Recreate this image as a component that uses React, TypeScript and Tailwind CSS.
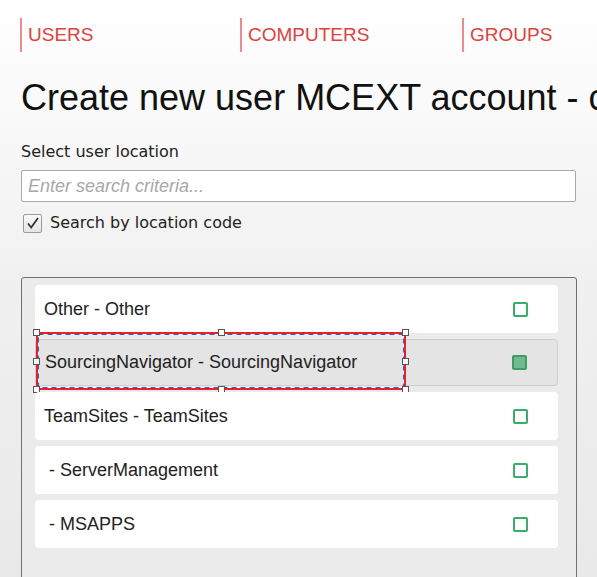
import React from "react";

const locations = [
  { label: "Other - Other", selected: false },
  { label: "SourcingNavigator - SourcingNavigator", selected: true },
  { label: "TeamSites - TeamSites", selected: false },
  { label: " - ServerManagement", selected: false },
  { label: " - MSAPPS", selected: false },
];

function Handle() {
  return <div className="w-[7px] h-[7px] bg-white border border-[#555]" />;
}

// inspector-style highlight drawn over the selected row
function SelectionOverlay() {
  return (
    <div className="absolute left-0 top-[-8px] w-[370px] h-[58px] border-2 border-[#e8202a] pointer-events-none">
      <svg className="absolute inset-0 w-full h-full">
        <rect x="0.5" y="0.5" width="365" height="53" fill="none" stroke="#ffffff" strokeWidth="1" />
        <rect x="0.5" y="0.5" width="365" height="53" fill="none" stroke="#2d5fd3" strokeWidth="1" strokeDasharray="5 4" />
      </svg>
      <div className="absolute inset-[-5px] flex flex-col justify-between">
        <div className="flex justify-between">
          <Handle />
          <Handle />
          <Handle />
        </div>
        <div className="flex justify-between">
          <Handle />
          <Handle />
        </div>
        <div className="flex justify-between">
          <Handle />
          <Handle />
          <Handle />
        </div>
      </div>
    </div>
  );
}

export default function App() {
  return (
    <div className="h-[577px] w-full overflow-hidden bg-gradient-to-b from-[#ffffff] via-[#f0f0f0] to-[#e9e9e9] font-['Liberation_Sans',Arial,sans-serif]">
      {/* Top nav */}
      <nav className="flex pt-[18px] pl-5">
        <div className="w-[220px] shrink-0 h-[34px] flex items-center border-l-2 border-[#ee8c8c] pl-[6px] text-[19px] text-[#e1403d]">
          USERS
        </div>
        <div className="w-[222px] shrink-0 h-[34px] flex items-center border-l-2 border-[#ee8c8c] pl-[6px] text-[19px] text-[#e1403d]">
          COMPUTERS
        </div>
        <div className="w-[222px] shrink-0 h-[34px] flex items-center border-l-2 border-[#ee8c8c] pl-[6px] text-[19px] text-[#e1403d]">
          GROUPS
        </div>
      </nav>

      <div className="px-[21px]">
        {/* Heading */}
        <h1 className="mt-[25px] text-[36px] leading-[41px] text-[#111] whitespace-nowrap">
          Create new user MCEXT account - cloud only
        </h1>

        <div className="mt-[24px] text-[16px] leading-[19px] text-[#222] font-['DejaVu_Sans',Verdana,sans-serif]">
          Select user location
        </div>

        <input
          type="text"
          placeholder="Enter search criteria..."
          className="mt-[9px] w-[555px] h-[32px] bg-white border border-[#a9a9ad] rounded-[2px] px-[6px] text-[18px] italic placeholder:text-[#a8a8a8] outline-none"
        />

        <label className="mt-[9px] h-[24px] flex items-center gap-[8px] text-[16px] text-[#222] font-['DejaVu_Sans',Verdana,sans-serif]">
          <span className="ml-[2px] w-[19px] h-[19px] rounded-[2px] border border-[#9a9a9a] bg-gradient-to-b from-[#fafafa] to-[#e4e4e4] flex items-center justify-center">
            <svg width="14" height="14" viewBox="0 0 14 14">
              <path d="M2 7.5 L5.2 11.5 L12 2" fill="none" stroke="#333" strokeWidth="1.8" />
            </svg>
          </span>
          Search by location code
        </label>

        {/* Locations panel */}
        <div className="mt-[42px] w-[556px] h-[320px] border border-[#707070] rounded-t-[3px] bg-[#ebebeb] pt-[7px] pl-[13px] pr-[18px] flex flex-col gap-[6px]">
          {locations.map((loc) => (
            <div
              key={loc.label}
              className={`relative shrink-0 rounded-[4px] flex items-center justify-between pl-[9px] pr-[30px] text-[18px] text-[#222] whitespace-pre ${
                loc.selected
                  ? "h-[47px] bg-[#e4e4e4] border border-[#cdcdcd]"
                  : "h-[48px] bg-white"
              }`}
            >
              <span>{loc.label}</span>
              <span
                className={`w-[15px] h-[15px] rounded-[2px] border-2 ${
                  loc.selected
                    ? "bg-[#72b98e] border-[#3b9e63]"
                    : "bg-white border-[#3aad6a]"
                }`}
              />
              {loc.selected && <SelectionOverlay />}
            </div>
          ))}
        </div>
      </div>
    </div>
  );
}
